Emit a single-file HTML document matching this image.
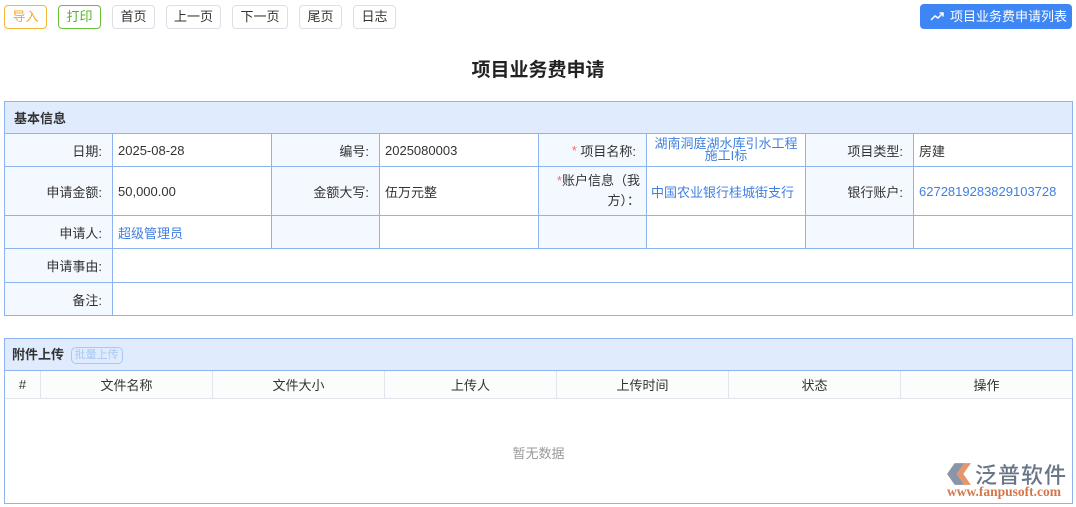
<!DOCTYPE html>
<html><head><meta charset="utf-8"><style>
*{box-sizing:border-box;margin:0;padding:0}
body{width:1076px;height:507px;background:#fff;font-family:"Liberation Sans","Noto Sans CJK SC",sans-serif;font-size:13px;color:#333;position:relative;overflow:hidden}
.a{position:absolute}
.btn{position:absolute;top:5px;height:24px;border:1px solid #dcdfe6;border-radius:4px;font-size:13px;line-height:22px;text-align:center;color:#333;background:#fff}
.c{position:absolute;border-right:1px solid #8db4f0;border-bottom:1px solid #8db4f0;display:flex;align-items:center;padding:0 5px}
.l{background:#f4f8ff;justify-content:flex-end;padding-right:10px}
.lnk{color:#3f7fe0}
.h{position:absolute;border-right:1px solid #e2e6ec;top:371px;height:27px;display:flex;align-items:center;justify-content:center;color:#333;background:#fbfdfd}
</style></head><body>
<div class="btn" style="left:4px;width:43px;border-color:#f5b73b;color:#f5a623">导入</div>
<div class="btn" style="left:58px;width:43px;border-color:#67c23a;color:#52b523">打印</div>
<div class="btn" style="left:112px;width:43px">首页</div>
<div class="btn" style="left:166px;width:55px">上一页</div>
<div class="btn" style="left:232px;width:56px">下一页</div>
<div class="btn" style="left:299px;width:43px">尾页</div>
<div class="btn" style="left:353px;width:43px">日志</div>
<div class="a" style="left:920px;top:4px;width:152px;height:25px;background:#3f86f5;border-radius:4px;color:#fff;line-height:25px;font-size:13px;padding-left:30px">项目业务费申请列表
<svg class="a" style="left:10px;top:7px" width="14" height="10" viewBox="0 0 14 10"><path d="M1 9 L5 5 L8 7 L13 2 M9.5 2 H13 V5.5" stroke="#fff" stroke-width="1.5" fill="none"/></svg></div>
<div class="a" style="left:0;top:55px;width:1076px;text-align:center;font-size:19px;font-weight:bold;color:#222">项目业务费申请</div>

<div class="a" style="left:4px;top:101px;width:1069px;height:215px;border:1px solid #8db4f0;border-right:none;border-bottom:none"></div>
<div class="c" style="left:4px;top:101px;width:1069px;height:33px;background:#e0ecfd;border-left:1px solid #8db4f0;border-top:1px solid #8db4f0;font-weight:bold;padding-left:9px">基本信息</div>
<div class="c l" style="left:4px;top:134px;width:109px;height:33px;border-left:1px solid #8db4f0">日期:</div>
<div class="c" style="left:113px;top:134px;width:159px;height:33px">2025-08-28</div>
<div class="c l" style="left:272px;top:134px;width:108px;height:33px">编号:</div>
<div class="c" style="left:380px;top:134px;width:159px;height:33px">2025080003</div>
<div class="c l" style="left:539px;top:134px;width:108px;height:33px"><span style="color:#f56c6c">*</span>&nbsp;项目名称:</div>
<div class="c lnk" style="left:647px;top:134px;width:159px;height:33px;justify-content:center;text-align:center;line-height:12px">湖南洞庭湖水库引水工程<br>施工I标</div>
<div class="c l" style="left:806px;top:134px;width:108px;height:33px">项目类型:</div>
<div class="c" style="left:914px;top:134px;width:159px;height:33px">房建</div>
<div class="c l" style="left:4px;top:167px;width:109px;height:49px;border-left:1px solid #8db4f0">申请金额:</div>
<div class="c" style="left:113px;top:167px;width:159px;height:49px">50,000.00</div>
<div class="c l" style="left:272px;top:167px;width:108px;height:49px">金额大写:</div>
<div class="c" style="left:380px;top:167px;width:159px;height:49px">伍万元整</div>
<div class="c l" style="left:539px;top:167px;width:108px;height:49px;text-align:right;line-height:20px;padding-right:6px"><span><span style="color:#f56c6c">*</span>账户信息（我<br>方）：</span></div>
<div class="c lnk" style="left:647px;top:167px;width:159px;height:49px;padding-left:4px">中国农业银行桂城街支行</div>
<div class="c l" style="left:806px;top:167px;width:108px;height:49px">银行账户:</div>
<div class="c lnk" style="left:914px;top:167px;width:159px;height:49px">6272819283829103728</div>
<div class="c l" style="left:4px;top:216px;width:109px;height:33px;border-left:1px solid #8db4f0">申请人:</div>
<div class="c lnk" style="left:113px;top:216px;width:159px;height:33px">超级管理员</div>
<div class="c l" style="left:272px;top:216px;width:108px;height:33px"></div>
<div class="c" style="left:380px;top:216px;width:159px;height:33px"></div>
<div class="c l" style="left:539px;top:216px;width:108px;height:33px"></div>
<div class="c" style="left:647px;top:216px;width:159px;height:33px"></div>
<div class="c l" style="left:806px;top:216px;width:108px;height:33px"></div>
<div class="c" style="left:914px;top:216px;width:159px;height:33px"></div>
<div class="c l" style="left:4px;top:249px;width:109px;height:34px;border-left:1px solid #8db4f0">申请事由:</div>
<div class="c" style="left:113px;top:249px;width:960px;height:34px"></div>
<div class="c l" style="left:4px;top:283px;width:109px;height:33px;border-left:1px solid #8db4f0">备注:</div>
<div class="c" style="left:113px;top:283px;width:960px;height:33px"></div>

<div class="a" style="left:4px;top:338px;width:1069px;height:166px;border:1px solid #8db4f0"></div>
<div class="a" style="left:5px;top:339px;width:1067px;height:32px;background:#e0ecfd;border-bottom:1px solid #8db4f0;font-weight:bold;line-height:31px;padding-left:7px">附件上传
<span style="display:inline-block;margin-left:3px;border:1px solid #a9c8f5;border-radius:5px;color:#a9c8f5;font-weight:normal;font-size:11px;line-height:15px;padding:0 3px;vertical-align:1px">批量上传</span></div>
<div class="h" style="left:5px;width:36px">#</div>
<div class="h" style="left:41px;width:172px">文件名称</div>
<div class="h" style="left:213px;width:172px">文件大小</div>
<div class="h" style="left:385px;width:172px">上传人</div>
<div class="h" style="left:557px;width:172px">上传时间</div>
<div class="h" style="left:729px;width:172px">状态</div>
<div class="h" style="left:901px;width:171px;border-right:none">操作</div>
<div class="a" style="left:5px;top:398px;width:1067px;height:1px;background:#e2e6ec"></div>
<div class="a" style="left:5px;top:443px;width:1067px;text-align:center;color:#999">暂无数据</div>
<svg class="a" style="left:944px;top:461px" width="30" height="26" viewBox="0 0 26 24"><path d="M2 12 L9 2 H18 L11 12 L18 22 H9 Z" fill="#8a96a8"/><path d="M11 12 L18 2 H24 L17 12 L24 22 H18 Z" fill="#e8956a"/></svg>
<div class="a" style="left:975px;top:458px;font-size:22px;color:#6a7688;letter-spacing:1px;font-weight:500">泛普软件</div>
<div class="a" style="left:947px;top:484px;font-family:'Liberation Serif',serif;font-size:13.5px;font-weight:bold;color:#d4764a">www.fanpusoft.com</div>
</body></html>
